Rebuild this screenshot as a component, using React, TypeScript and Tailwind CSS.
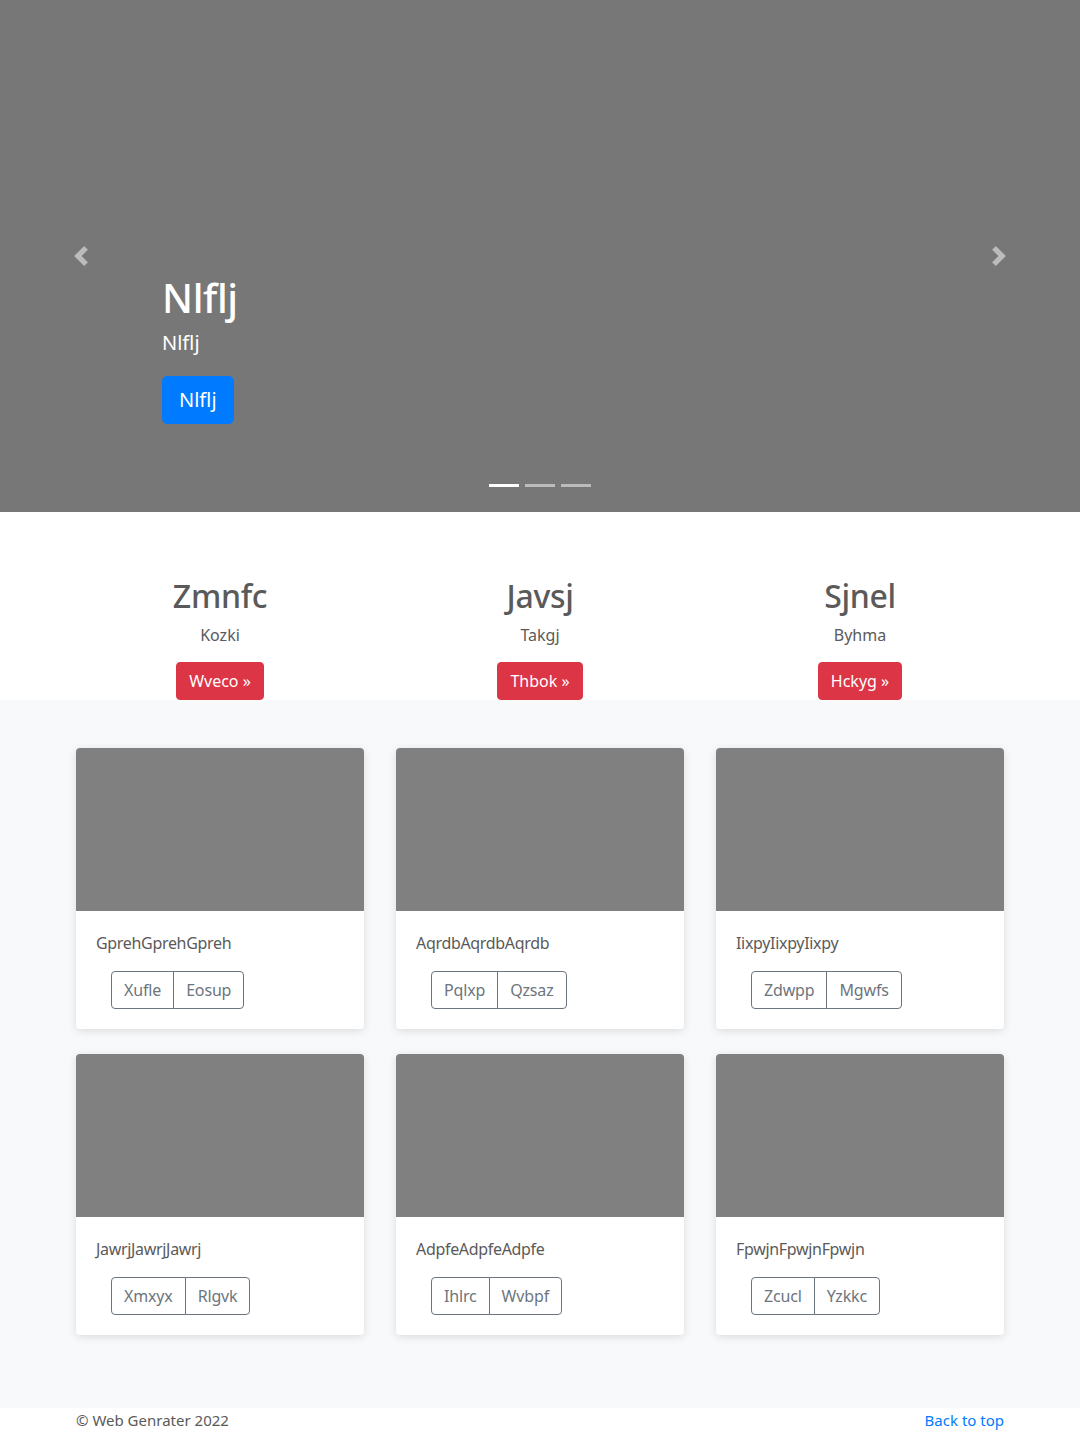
const features = [
  { title: 'Zmnfc', text: 'Kozki', cta: 'Wveco' },
  { title: 'Javsj', text: 'Takgj', cta: 'Thbok' },
  { title: 'Sjnel', text: 'Byhma', cta: 'Hckyg' },
];

const cards = [
  { label: 'GprehGprehGpreh', a: 'Xufle', b: 'Eosup' },
  { label: 'AqrdbAqrdbAqrdb', a: 'Pqlxp', b: 'Qzsaz' },
  { label: 'IixpyIixpyIixpy', a: 'Zdwpp', b: 'Mgwfs' },
  { label: 'JawrjJawrjJawrj', a: 'Xmxyx', b: 'Rlgvk' },
  { label: 'AdpfeAdpfeAdpfe', a: 'Ihlrc', b: 'Wvbpf' },
  { label: 'FpwjnFpwjnFpwjn', a: 'Zcucl', b: 'Yzkkc' },
];

function Carousel() {
  return (
    <div className="relative h-[512px] bg-[#777777]">
      <button className="absolute left-0 top-0 flex h-full w-[162px] items-center justify-center opacity-50">
        <svg width="20" height="20" viewBox="0 0 8 8" fill="#fff">
          <path d="M5.25 0l-4 4 4 4 1.5-1.5L4.25 4l2.5-2.5L5.25 0z" />
        </svg>
      </button>
      <button className="absolute right-0 top-0 flex h-full w-[162px] items-center justify-center opacity-50">
        <svg width="20" height="20" viewBox="0 0 8 8" fill="#fff">
          <path d="M2.75 0l-1.5 1.5L3.75 4l-2.5 2.5L2.75 8l4-4-4-4z" />
        </svg>
      </button>

      <div className="mx-auto flex h-full w-[960px] flex-col justify-end pb-[88px] pl-[102px] pr-[87px] text-white">
        <h1 className="text-[40px] font-medium leading-[1.2] tracking-[-0.01em]">Nlflj</h1>
        <p className="mt-[6px] text-[20px] leading-[1.5]">Nlflj</p>
        <div className="mt-[18px]">
          <span className="inline-block rounded-[5px] border border-[#007bff] bg-[#007bff] px-[16px] py-[8px] text-[20px] leading-[1.5] text-white">
            Nlflj
          </span>
        </div>
      </div>

      <div className="absolute bottom-[25px] left-0 right-0 flex justify-center gap-[6px]">
        <span className="h-[3px] w-[30px] bg-white" />
        <span className="h-[3px] w-[30px] bg-white opacity-50" />
        <span className="h-[3px] w-[30px] bg-white opacity-50" />
      </div>
    </div>
  );
}

function Features() {
  return (
    <div className="mx-auto grid w-[960px] grid-cols-3 pt-[65px] text-[#5a5a5a]">
      {features.map((f) => (
        <div key={f.title} className="flex flex-col items-center px-[15px]">
          <h2 className="text-[32px] font-medium leading-[1.2] tracking-[-0.01em]">{f.title}</h2>
          <p className="mt-[8px] text-[16px] leading-[1.5]">{f.text}</p>
          <span className="mt-[15px] inline-block rounded-[4px] border border-[#dc3545] bg-[#dc3545] px-[12px] py-[6px] text-[16px] leading-[1.5] text-white">
            {f.cta} »
          </span>
        </div>
      ))}
    </div>
  );
}

function Album() {
  return (
    <div className="bg-[#f8f9fa] pb-[73px] pt-[48px]">
      <div className="mx-auto grid w-[960px] grid-cols-3 gap-x-[32px] gap-y-[25px] px-[16px]">
        {cards.map((c) => (
          <div key={c.label} className="overflow-hidden rounded-[4px] bg-white shadow-[0_2px_8px_rgba(0,0,0,0.12)]">
            <div className="h-[163px] bg-[#808080]" />
            <div className="px-[20px] pb-[20px] pt-[20px]">
              <p className="text-[16px] leading-[1.5] tracking-[-0.02em] text-[#5a5a5a]">{c.label}</p>
              <div className="ml-[15px] mt-[16px] inline-flex text-[16px] leading-[1.5] tracking-[-0.01em] text-[#6c757d]">
                <span className="rounded-l-[4px] border border-[#6c757d] px-[12px] py-[6px]">{c.a}</span>
                <span className="-ml-px rounded-r-[4px] border border-[#6c757d] px-[12px] py-[6px]">{c.b}</span>
              </div>
            </div>
          </div>
        ))}
      </div>
    </div>
  );
}

export default function App() {
  return (
    <div className="min-h-[1432px] bg-white font-['Noto_Sans',sans-serif]">
      <Carousel />
      <Features />
      <Album />
      <footer className="mx-auto flex w-[960px] justify-between px-[16px] text-[15px] leading-[24px] text-[#5a5a5a]">
        <span>© Web Genrater 2022</span>
        <span className="text-[#007bff]">Back to top</span>
      </footer>
    </div>
  );
}
